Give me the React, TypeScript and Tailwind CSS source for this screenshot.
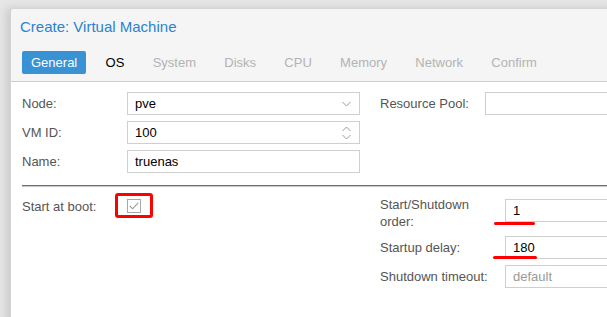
import React from 'react';

const font = { fontFamily: '"Liberation Sans", Arial, sans-serif' };

const tabs = [
    { name: 'General', state: 'active' },
    { name: 'OS', state: 'normal' },
    { name: 'System', state: 'disabled' },
    { name: 'Disks', state: 'disabled' },
    { name: 'CPU', state: 'disabled' },
    { name: 'Memory', state: 'disabled' },
    { name: 'Network', state: 'disabled' },
    { name: 'Confirm', state: 'disabled' },
];

const Chevron = ({ up = false }: { up?: boolean }) => (
    <svg width="9" height="6" viewBox="0 0 9 6" className="block">
        <path d={up ? 'M0.5 5 L4.5 1 L8.5 5' : 'M0.5 1 L4.5 5 L8.5 1'} fill="none" stroke="#9a9a9a" strokeWidth="1" />
    </svg>
);

const Field = ({ value, className = '', muted = false, children }: { value?: string; className?: string; muted?: boolean; children?: React.ReactNode }) => (
    <div className={`shrink-0 h-[23px] border border-[#cfcfcf] bg-white flex items-center pl-[7px] pr-[8px] text-[13px] ${muted ? 'text-[#9a9a9a]' : 'text-black'} ${className}`}>
        <span className="flex-1">{value}</span>
        {children}
    </div>
);

const Label = ({ children, className = '' }: { children: React.ReactNode; className?: string }) => (
    <div className={`shrink-0 text-[13px] text-[#555] leading-[17px] ${className}`}>{children}</div>
);

export default function App() {
    return (
        <div style={font} className="w-[607px] h-[317px] overflow-hidden bg-[#e6e6e6] pt-2 pl-[10px]">
            <div className="w-[700px] h-[330px] bg-[#f5f5f5] border-l border-t border-[#d4d4d4] rounded-tl-[3px] shadow-[-4px_0_8px_rgba(0,0,0,0.12)] flex flex-col">
                {/* Title */}
                <div className="pl-[9px] pt-[9px] text-[15px] leading-[17px] text-[#2b83d0]">Create: Virtual Machine</div>

                {/* Tabs */}
                <div className="flex gap-[10.3px] pl-[11px] mt-[16px] mb-[7px]">
                    {tabs.map((t) => (
                        <div
                            key={t.name}
                            className={`h-[23px] px-[9px] flex items-center text-[13px] ${
                                t.state === 'active'
                                    ? 'bg-[#3892d4] text-white rounded-[2px]'
                                    : t.state === 'normal'
                                      ? 'text-black'
                                      : 'text-[#b3b3b3]'
                            }`}
                        >
                            {t.name}
                        </div>
                    ))}
                </div>

                {/* Panel */}
                <div className="flex-1 bg-white border-t border-[#cfcfcf] pl-[11px] pt-[10px]">
                    <div className="flex">
                        <div className="shrink-0 flex flex-col gap-[6px]">
                            <div className="flex items-center">
                                <Label className="w-[105px]">Node:</Label>
                                <Field value="pve" className="w-[233px]">
                                    <Chevron />
                                </Field>
                            </div>
                            <div className="flex items-center">
                                <Label className="w-[105px]">VM ID:</Label>
                                <Field value="100" className="w-[233px]">
                                    <div className="flex flex-col gap-[2px]">
                                        <Chevron up />
                                        <Chevron />
                                    </div>
                                </Field>
                            </div>
                            <div className="flex items-center">
                                <Label className="w-[105px]">Name:</Label>
                                <Field value="truenas" className="w-[233px]" />
                            </div>
                        </div>
                        <div className="flex items-start ml-[20px]">
                            <div className="flex items-center">
                                <Label className="w-[105px]">Resource Pool:</Label>
                                <Field className="w-[200px]" />
                            </div>
                        </div>
                    </div>

                    {/* Separator */}
                    <div className="mt-[12px] h-[2px] bg-[#6f6f6f] border-b border-[#c8c8c8]" />

                    <div className="flex">
                        <div className="shrink-0 w-[358px] pt-[12px]">
                            <div className="flex items-center h-[14px]">
                                <Label className="w-[105px]">Start at boot:</Label>
                                <div className="relative">
                                    <div className="w-[14px] h-[14px] border border-[#a8a8a8] flex items-center justify-center">
                                        <svg width="10" height="8" viewBox="0 0 10 8">
                                            <path d="M0.8 4 L3.6 6.8 L9.2 0.8" fill="none" stroke="#9a9a9a" strokeWidth="1.1" />
                                        </svg>
                                    </div>
                                    <div className="absolute -left-[12px] -top-[6px] w-[38px] h-[25px] border-[3px] border-[#ff0000] rounded-[3px]" />
                                </div>
                            </div>
                        </div>
                        <div className="shrink-0 pt-[12px] flex flex-col">
                            <div className="flex items-start">
                                <Label className="w-[125px] -mt-[3px]">
                                    Start/Shutdown
                                    <br />
                                    order:
                                </Label>
                                <div className="relative">
                                    <Field value="1" className="w-[200px]" />
                                    <div className="absolute -left-[11px] top-[23px] w-[41px] h-[3px] bg-[#ff0000] rounded-full" />
                                </div>
                            </div>
                            <div className="flex items-center mt-[6px]">
                                <Label className="w-[125px]">Startup delay:</Label>
                                <div className="relative">
                                    <Field value="180" className="w-[200px]" />
                                    <div className="absolute -left-[12px] top-[20px] w-[44px] h-[3px] bg-[#ff0000] rounded-full" />
                                </div>
                            </div>
                            <div className="flex items-center mt-[6px]">
                                <Label className="w-[125px]">Shutdown timeout:</Label>
                                <Field value="default" muted className="w-[200px]" />
                            </div>
                        </div>
                    </div>
                </div>
            </div>
        </div>
    );
}
